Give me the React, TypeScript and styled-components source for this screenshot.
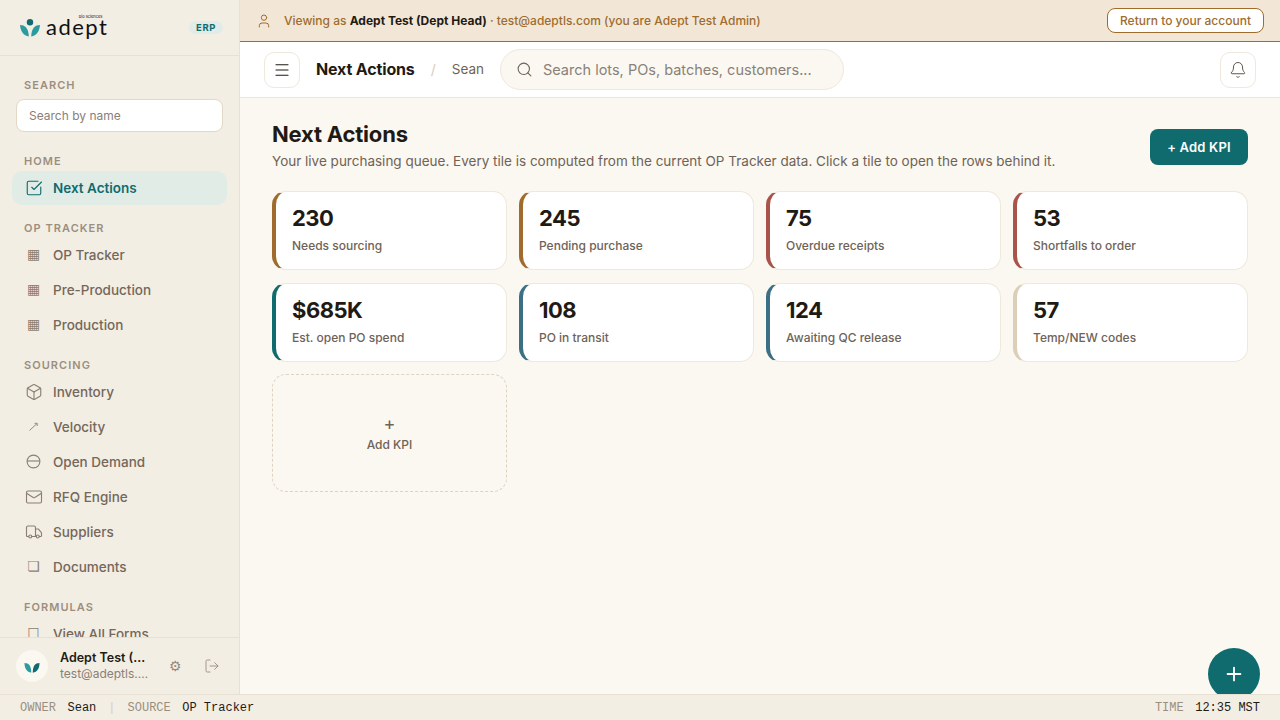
import React from 'react';
import styled, { createGlobalStyle } from 'styled-components';
import { Bell, Box, LogOut, Mail, Menu, Plus, Search, SquareCheckBig, Truck, User } from 'lucide-react';

const GlobalStyle = createGlobalStyle`
  html, body {
    margin: 0;
    height: 100%;
    overflow: hidden;
  }
  body {
    font-family: Inter, "Noto Sans", sans-serif;
    background: #fbf8f1;
    color: #1f1a14;
  }
  * {
    box-sizing: border-box;
  }
`;

const Page = styled.div`
  width: 1280px;
  height: 720px;
  display: flex;
  flex-direction: column;
  overflow: hidden;
`;

const Body = styled.div`
  flex: 1;
  min-height: 0;
  display: flex;
`;

const Sidebar = styled.aside`
  width: 240px;
  flex-shrink: 0;
  display: flex;
  flex-direction: column;
  background: #f2eee4;
  border-right: 1px solid #e8e1d3;
`;

const Brand = styled.div`
  height: 56px;
  flex-shrink: 0;
  display: flex;
  align-items: center;
  justify-content: space-between;
  padding: 0 16px 0 20px;
  border-bottom: 1px solid #e8e1d3;
`;

const Logo = styled.div`
  display: flex;
  align-items: center;
  gap: 6px;
`;

const Wordmark = styled.div`
  position: relative;
  margin-top: -1px;
  font-family: Lato, sans-serif;
  font-size: 22px;
  line-height: 24px;
  font-weight: 400;
  letter-spacing: 1.5px;
  color: #111;
`;

const WordmarkTag = styled.span`
  position: absolute;
  top: 0;
  right: 6px;
  font-family: Inter, sans-serif;
  font-size: 4px;
  line-height: 4px;
  letter-spacing: 0;
  white-space: nowrap;
`;

const ErpBadge = styled.span`
  font-size: 9.5px;
  font-weight: 700;
  line-height: 13px;
  letter-spacing: 0.6px;
  padding: 0 7px;
  border-radius: 7px;
  color: #106b6e;
  background: #e1ece8;
`;

const Nav = styled.nav`
  flex: 1;
  min-height: 0;
  overflow: hidden;
  padding: 23px 12px 0;
`;

const SectionLabel = styled.div<{ $top: number }>`
  margin-top: ${(p) => p.$top}px;
  padding-left: 12px;
  font-size: 11px;
  line-height: 13px;
  font-weight: 600;
  letter-spacing: 1.05px;
  color: #9c8e7e;
`;

const NameSearch = styled.input`
  display: block;
  width: 207px;
  height: 33px;
  margin: 7px 0 0 4px;
  padding: 0 12px;
  font-family: inherit;
  font-size: 12px;
  color: #1f1a14;
  background: #fff;
  border: 1px solid #e2d8c6;
  border-radius: 8px;
  outline: none;
  &::placeholder {
    color: #8a8078;
    opacity: 1;
  }
`;

const NavItem = styled.div<{ $active?: boolean }>`
  height: ${(p) => (p.$active ? 34 : 35)}px;
  padding: ${(p) => (p.$active ? '0 12px 1px' : '0 12px')};
  display: flex;
  align-items: center;
  gap: 10px;
  border-radius: 10px;
  font-size: 13.5px;
  line-height: 16px;
  font-weight: ${(p) => (p.$active ? 600 : 500)};
  color: ${(p) => (p.$active ? '#106b6e' : '#75675a')};
  background: ${(p) => (p.$active ? '#e2ece7' : 'transparent')};
  svg {
    color: ${(p) => (p.$active ? '#106b6e' : '#8a7f72')};
  }
`;

const IconSlot = styled.span`
  width: 19px;
  height: 19px;
  flex-shrink: 0;
  display: flex;
  align-items: center;
  justify-content: center;
  font-family: "DejaVu Sans", sans-serif;
  font-size: 14px;
  line-height: 19px;
  color: #8a7f72;
`;

const Items = styled.div<{ $top?: number }>`
  margin-top: ${(p) => p.$top ?? 2}px;
`;

const SidebarFooter = styled.div`
  height: 57px;
  flex-shrink: 0;
  display: flex;
  align-items: center;
  padding: 0 20px 0 16px;
  background: #f2eee4;
  border-top: 1px solid #e8e1d3;
`;

const Avatar = styled.div`
  width: 32px;
  height: 32px;
  flex-shrink: 0;
  display: flex;
  align-items: center;
  justify-content: center;
  border-radius: 50%;
  background: #fbf8f1;
`;

const UserInfo = styled.div`
  width: 90px;
  margin-left: 12px;
  flex-shrink: 0;
`;

const UserName = styled.div`
  font-size: 12.5px;
  line-height: 16px;
  font-weight: 600;
  color: #1f1a14;
  white-space: nowrap;
  overflow: hidden;
  text-overflow: ellipsis;
`;

const UserMail = styled.div`
  font-size: 12px;
  line-height: 16px;
  color: #8a8078;
  white-space: nowrap;
  overflow: hidden;
  text-overflow: ellipsis;
`;

const FooterActions = styled.div`
  display: flex;
  align-items: center;
  gap: 22px;
  margin-left: 19px;
  font-family: "DejaVu Sans", sans-serif;
  font-size: 14px;
  line-height: 16px;
  color: #96897b;
`;

const Main = styled.main`
  position: relative;
  flex: 1;
  min-width: 0;
  display: flex;
  flex-direction: column;
`;

const Banner = styled.div`
  height: 42px;
  flex-shrink: 0;
  display: flex;
  align-items: center;
  gap: 12px;
  padding: 0 16px;
  font-size: 12px;
  font-weight: 500;
  color: #a06c2e;
  background: #f2e7d6;
  border-bottom: 1px solid #a06c2e;
`;

const BannerText = styled.div`
  flex: 1;
  white-space: nowrap;
  strong {
    font-weight: 700;
    color: #1f1a14;
  }
`;

const ReturnButton = styled.button`
  width: 157px;
  height: 25px;
  padding: 0;
  font-family: inherit;
  font-size: 12px;
  font-weight: 500;
  color: #a06c2e;
  background: #fff;
  border: 1px solid #a06c2e;
  border-radius: 8px;
`;

const TopBar = styled.header`
  height: 56px;
  flex-shrink: 0;
  display: flex;
  align-items: center;
  padding: 0 24px;
  background: #fff;
  border-bottom: 1px solid #e8e6e1;
`;

const IconButton = styled.button`
  width: 36px;
  height: 36px;
  padding: 0;
  flex-shrink: 0;
  display: flex;
  align-items: center;
  justify-content: center;
  color: #1f1a14;
  background: #fff;
  border: 1px solid #efe8dc;
  border-radius: 10px;
`;

const BellButton = styled(IconButton)`
  color: #5c5146;
`;

const TopTitle = styled.div`
  margin: -2px 0 0 16px;
  font-size: 16px;
  font-weight: 700;
  letter-spacing: -0.15px;
  color: #1f1a14;
  white-space: nowrap;
`;

const Slash = styled.span`
  margin-left: 16px;
  font-size: 14px;
  color: #d6cdbd;
`;

const Crumb = styled.span`
  margin: -2px 0 0 16px;
  font-size: 13.5px;
  color: #6f6256;
`;

const GlobalSearch = styled.div`
  width: 344px;
  height: 41px;
  margin-left: 16px;
  display: flex;
  align-items: center;
  gap: 10px;
  padding: 0 15px;
  color: #6f6256;
  background: #fbf8f1;
  border: 1px solid #efe8dc;
  border-radius: 21px;
`;

const GlobalSearchInput = styled.input`
  flex: 1;
  min-width: 0;
  padding: 0;
  font-family: inherit;
  font-size: 14.5px;
  background: transparent;
  border: 0;
  outline: none;
  &::placeholder {
    color: #8a8078;
    opacity: 1;
  }
`;

const Spacer = styled.div`
  flex: 1;
`;

const Content = styled.div`
  flex: 1;
  min-height: 0;
  padding: 23px 32px 0;
`;

const PageHead = styled.div`
  display: flex;
  align-items: flex-start;
  justify-content: space-between;
`;

const PageTitle = styled.h1`
  margin: 0;
  font-size: 22px;
  line-height: 26px;
  font-weight: 700;
  letter-spacing: -0.2px;
  color: #1f1a14;
`;

const PageSub = styled.p`
  margin: 4px 0 0;
  font-size: 13.5px;
  line-height: 20px;
  color: #6f6256;
`;

const AddButton = styled.button`
  width: 98px;
  height: 36px;
  margin-top: 8px;
  padding: 0;
  font-family: inherit;
  font-size: 13px;
  font-weight: 600;
  letter-spacing: 0.2px;
  color: #fff;
  background: #106b6e;
  border: 0;
  border-radius: 8px;
`;

const TileGrid = styled.div`
  display: grid;
  grid-template-columns: repeat(4, 235px);
  grid-auto-rows: 79px;
  gap: 13px 12px;
  margin-top: 20px;
`;

const Tile = styled.div<{ $accent: string }>`
  display: flex;
  flex-direction: column;
  padding: 13px 16px;
  background: #fff;
  border: 1px solid #efe8dc;
  border-left: 4px solid ${(p) => p.$accent};
  border-radius: 14px;
`;

const TileValue = styled.div`
  font-size: 22px;
  line-height: 26px;
  font-weight: 700;
  letter-spacing: -0.5px;
  color: #1f1a14;
`;

const TileLabel = styled.div`
  margin-top: 7px;
  font-size: 12px;
  line-height: 16px;
  font-weight: 500;
  color: #6f6256;
`;

const AddTile = styled.div`
  height: 118px;
  margin-top: -1px;
  grid-row: span 2;
  display: flex;
  flex-direction: column;
  align-items: center;
  justify-content: center;
  color: #6f6256;
  border: 1px dashed #ddd3c0;
  border-radius: 14px;
`;

const AddTilePlus = styled.span`
  font-size: 18px;
  line-height: 22px;
`;

const AddTileLabel = styled.span`
  font-size: 12px;
  font-weight: 500;
  line-height: 18px;
  margin-top: 1px;
`;

const Fab = styled.button`
  position: absolute;
  right: 20px;
  bottom: -6px;
  width: 52px;
  height: 52px;
  padding: 0;
  display: flex;
  align-items: center;
  justify-content: center;
  color: #fff;
  background: #106b6e;
  border: 0;
  border-radius: 50%;
`;

const StatusBar = styled.footer`
  position: relative;
  z-index: 2;
  height: 26px;
  flex-shrink: 0;
  display: flex;
  align-items: center;
  padding: 0 20px;
  font-family: "Liberation Mono", "DejaVu Sans Mono", monospace;
  font-size: 12px;
  color: #1f1a14;
  background: #f2eee4;
  border-top: 1px solid #e8e1d3;
`;

const StatusKey = styled.span`
  margin-right: 11.5px;
  color: #9c8e7e;
`;

const StatusDivider = styled.span`
  margin: 0 12px;
  color: #d6cdbd;
`;

const Leaf = ({ size }: { size: number }) => (
  <svg width={size} height={size} viewBox="0 0 24 24">
    <path d="M2 8c6 0 9 4 9 13C5 20 2 15 2 8z" fill="#2a9ca0" />
    <path d="M22 8c-6 0-9 4-9 13 6-1 9-6 9-13z" fill="#106b6e" />
  </svg>
);

const LogoMark = () => (
  <svg width="20" height="18" viewBox="0 0 20 18">
    <circle cx="10" cy="3.2" r="3.2" fill="#106b6e" />
    <path d="M0 6c5 0 8.5 3 8.8 11.5C3.5 17 .5 12 0 6z" fill="#2a9ca0" />
    <path d="M20 6c-5 0-8.5 3-8.8 11.5C16.5 17 19.5 12 20 6z" fill="#2a9ca0" />
  </svg>
);

const HalfCircle = () => (
  <svg width="15" height="15" viewBox="0 0 15 15" fill="none" stroke="currentColor" strokeWidth="1.1">
    <circle cx="7.5" cy="7.5" r="6.4" />
    <path d="M1.1 7h12.8" />
  </svg>
);

const ThinArrow = () => (
  <svg width="11" height="11" viewBox="0 0 11 11" fill="none" stroke="currentColor" strokeWidth="0.9">
    <path d="M1.5 9.5 9 2.5" />
    <path d="M6.5 2.3H9.2V5" />
  </svg>
);

const tiles = [
  { value: '230', label: 'Needs sourcing', accent: '#a06c2e' },
  { value: '245', label: 'Pending purchase', accent: '#a06c2e' },
  { value: '75', label: 'Overdue receipts', accent: '#a8544a' },
  { value: '53', label: 'Shortfalls to order', accent: '#a8544a' },
  { value: '$685K', label: 'Est. open PO spend', accent: '#106b6e' },
  { value: '108', label: 'PO in transit', accent: '#3a6f86' },
  { value: '124', label: 'Awaiting QC release', accent: '#3a6f86' },
  { value: '57', label: 'Temp/NEW codes', accent: '#dccfba' },
];

function App(): React.JSX.Element {
  return (
    <Page>
      <GlobalStyle />
      <Body>
        <Sidebar>
          <Brand>
            <Logo>
              <LogoMark />
              <Wordmark>
                adept
                <WordmarkTag>bio sciences</WordmarkTag>
              </Wordmark>
            </Logo>
            <ErpBadge>ERP</ErpBadge>
          </Brand>
          <Nav>
            <SectionLabel $top={0}>SEARCH</SectionLabel>
            <NameSearch placeholder="Search by name" />
            <SectionLabel $top={23}>HOME</SectionLabel>
            <Items $top={3}>
              <NavItem $active>
                <IconSlot><SquareCheckBig size={18} strokeWidth={1.5} /></IconSlot>
                Next Actions
              </NavItem>
            </Items>
            <SectionLabel $top={17}>OP TRACKER</SectionLabel>
            <Items>
              <NavItem><IconSlot>▦</IconSlot>OP Tracker</NavItem>
              <NavItem><IconSlot>▦</IconSlot>Pre-Production</NavItem>
              <NavItem><IconSlot>▦</IconSlot>Production</NavItem>
            </Items>
            <SectionLabel $top={17}>SOURCING</SectionLabel>
            <Items>
              <NavItem><IconSlot><Box size={18} strokeWidth={1.5} /></IconSlot>Inventory</NavItem>
              <NavItem><IconSlot><ThinArrow /></IconSlot>Velocity</NavItem>
              <NavItem><IconSlot><HalfCircle /></IconSlot>Open Demand</NavItem>
              <NavItem><IconSlot><Mail size={18} strokeWidth={1.5} /></IconSlot>RFQ Engine</NavItem>
              <NavItem><IconSlot><Truck size={18} strokeWidth={1.5} /></IconSlot>Suppliers</NavItem>
              <NavItem><IconSlot>❏</IconSlot>Documents</NavItem>
            </Items>
            <SectionLabel $top={17}>FORMULAS</SectionLabel>
            <Items>
              <NavItem><IconSlot>☐</IconSlot>View All Forms</NavItem>
            </Items>
          </Nav>
          <SidebarFooter>
            <Avatar><Leaf size={18} /></Avatar>
            <UserInfo>
              <UserName>Adept Test (Dept Head)</UserName>
              <UserMail>test@adeptls.com</UserMail>
            </UserInfo>
            <FooterActions>
              <span>⚙</span>
              <LogOut size={16} strokeWidth={1.3} />
            </FooterActions>
          </SidebarFooter>
        </Sidebar>
        <Main>
          <Banner>
            <User size={16} strokeWidth={1.5} />
            <BannerText>
              Viewing as <strong>Adept Test (Dept Head)</strong> · test@adeptls.com (you are Adept Test Admin)
            </BannerText>
            <ReturnButton>Return to your account</ReturnButton>
          </Banner>
          <TopBar>
            <IconButton><Menu size={18} strokeWidth={1.5} /></IconButton>
            <TopTitle>Next Actions</TopTitle>
            <Slash>/</Slash>
            <Crumb>Sean</Crumb>
            <GlobalSearch>
              <Search size={17} strokeWidth={1.5} />
              <GlobalSearchInput placeholder="Search lots, POs, batches, customers..." />
            </GlobalSearch>
            <Spacer />
            <BellButton><Bell size={18} strokeWidth={1.3} /></BellButton>
          </TopBar>
          <Content>
            <PageHead>
              <div>
                <PageTitle>Next Actions</PageTitle>
                <PageSub>
                  Your live purchasing queue. Every tile is computed from the current OP Tracker data. Click a tile to open the rows behind it.
                </PageSub>
              </div>
              <AddButton>+ Add KPI</AddButton>
            </PageHead>
            <TileGrid>
              {tiles.map((t) => (
                <Tile key={t.label} $accent={t.accent}>
                  <TileValue>{t.value}</TileValue>
                  <TileLabel>{t.label}</TileLabel>
                </Tile>
              ))}
              <AddTile>
                <AddTilePlus>+</AddTilePlus>
                <AddTileLabel>Add KPI</AddTileLabel>
              </AddTile>
            </TileGrid>
          </Content>
          <Fab><Plus size={22} strokeWidth={2} /></Fab>
        </Main>
      </Body>
      <StatusBar>
        <StatusKey>OWNER</StatusKey>Sean
        <StatusDivider>|</StatusDivider>
        <StatusKey>SOURCE</StatusKey>OP Tracker
        <Spacer />
        <StatusKey>TIME</StatusKey>12:35 MST
      </StatusBar>
    </Page>
  );
}

export default App;
